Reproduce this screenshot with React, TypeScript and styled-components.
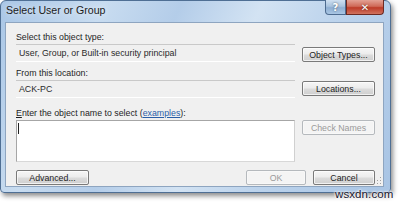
import styled, { createGlobalStyle } from 'styled-components';

const GlobalStyle = createGlobalStyle`
   html, body {
      margin: 0;
      padding: 0;
      background: #ffffff;
   }
   body {
      font-family: 'Liberation Sans', Arial, sans-serif;
   }
`;

const StageStyled = styled.div`
   position: relative;
   width: 400px;
   height: 206px;
   overflow: hidden;
   background: #ffffff;
`;

const WindowStyled = styled.div`
   display: flex;
   flex-direction: column;
   width: 391px;
   height: 193px;
   padding: 0 6px 5px 4px;
   box-sizing: border-box;
   border: 1px solid #4f6f94;
   border-radius: 6px 6px 4px 4px;
   background: linear-gradient(115deg, #a9c6e6 0%, #c8dcf0 22%, #b4cde9 38%, #d3e3f3 55%, #bcd3ec 72%, #a8c4e4 100%);
   box-shadow: 2px 3px 5px rgba(0, 0, 0, 0.45);
`;

const TitleBarStyled = styled.div`
   display: flex;
   align-items: flex-start;
   justify-content: space-between;
   height: 21px;
   flex-shrink: 0;
`;

const TitleTextStyled = styled.span`
   padding: 3px 0 0 1px;
   font-family: 'Liberation Sans', Arial, sans-serif;
   font-size: 10.6px;
   color: #1b1b1b;
   text-shadow: 0 0 6px rgba(255, 255, 255, 0.9);
`;

const CaptionButtonsStyled = styled.div`
   display: flex;
   margin-top: -1px;
`;

interface ICaptionButton {
   $variant: 'help' | 'close';
}

const CaptionButtonStyled = styled.div<ICaptionButton>`
   display: flex;
   align-items: center;
   justify-content: center;
   width: ${({ $variant }) => ($variant === 'close' ? '38px' : '21px')};
   height: 15px;
   box-sizing: border-box;
   border: 1px solid ${({ $variant }) => ($variant === 'close' ? '#6d2a22' : '#4d6b8f')};
   border-top: none;
   border-radius: ${({ $variant }) => ($variant === 'close' ? '0 0 4px 0' : '0 0 0 4px')};
   background: ${({ $variant }) =>
      $variant === 'close'
         ? 'linear-gradient(#e3a194 0%, #cf6a58 45%, #bd3b28 55%, #d0735f 100%)'
         : 'linear-gradient(#cfe0f1 0%, #a9c3de 45%, #8eaed2 55%, #a9c6e4 100%)'};
   color: #ffffff;
   font-family: 'DejaVu Sans', sans-serif;
   font-weight: bold;
   font-size: 10px;
   text-shadow: 0 0 2px rgba(0, 0, 0, 0.6);
`;

const ClientStyled = styled.div`
   position: relative;
   flex: 1;
   display: flex;
   flex-direction: column;
   padding: 8px 8px 0 10px;
   border: 1px solid #8ea5c0;
   background: #f0f0f0;
   font-family: 'Liberation Sans', Arial, sans-serif;
   font-size: 8.8px;
   color: #1e1e1e;
`;

const LabelStyled = styled.div`
   height: 12px;
   line-height: 12px;
   margin-bottom: 1px;
`;

const RowStyled = styled.div`
   display: grid;
   grid-template-columns: 1fr 73px;
   column-gap: 7px;
   align-items: start;
`;

const ReadonlyFieldStyled = styled.div`
   height: 16px;
   line-height: 16px;
   padding-left: 3px;
   border-top: 1px solid #c9c9c9;
   border-bottom: 1px solid #ffffff;
   color: #2a2a2a;
`;

interface IButton {
   $disabled?: boolean;
   $width?: number;
   $offset?: number;
}

const ButtonStyled = styled.div<IButton>`
   display: flex;
   align-items: center;
   justify-content: center;
   width: ${({ $width }) => ($width ? `${$width}px` : '100%')};
   height: 15px;
   margin-top: ${({ $offset }) => ($offset ? `${$offset}px` : '0')};
   box-sizing: border-box;
   border: 1px solid ${({ $disabled }) => ($disabled ? '#b5b9bd' : '#7a7a7a')};
   border-radius: 2px;
   background: ${({ $disabled }) =>
      $disabled ? '#f4f4f4' : 'linear-gradient(#f6f6f6 0%, #ececec 48%, #dcdcdc 52%, #cfcfcf 100%)'};
   color: ${({ $disabled }) => ($disabled ? '#9a9a9a' : '#1e1e1e')};
   font-size: 8.8px;
   box-shadow: inset 0 0 0 1px ${({ $disabled }) => ($disabled ? '#f8f8f8' : 'rgba(255, 255, 255, 0.7)')};
`;

const SpacerStyled = styled.div<{ $h: number }>`
   height: ${({ $h }) => $h}px;
`;

const NameInputStyled = styled.div`
   height: 42px;
   box-sizing: border-box;
   padding: 2px 0 0 1px;
   border: 1px solid #a6a6a6;
   border-bottom-color: #d8d8d8;
   border-right-color: #d0d0d0;
   background: #ffffff;
`;

const CaretStyled = styled.div`
   width: 1px;
   height: 11px;
   background: #222222;
`;

const LinkStyled = styled.span`
   color: #2a5ea8;
   text-decoration: underline;
`;

const UnderlineStyled = styled.span`
   text-decoration: underline;
`;

const FooterStyled = styled.div`
   display: flex;
   align-items: center;
   margin-top: 8px;
   gap: 7px;
`;

const FooterFillStyled = styled.div`
   flex: 1;
`;

const GripStyled = styled.svg`
   position: absolute;
   right: 1px;
   bottom: 1px;
`;

const WatermarkStyled = styled.div`
   position: absolute;
   left: 335px;
   top: 188px;
   font-family: 'Liberation Sans', Arial, sans-serif;
   font-size: 11.5px;
   color: #14142e;
   text-shadow: 0 0 2px #ffffff, 0 0 2px #ffffff, 0 0 3px #ffffff;
   letter-spacing: 0.1px;
`;

const App = () => {
   return (
      <StageStyled>
         <GlobalStyle />
         <WindowStyled>
            <TitleBarStyled>
               <TitleTextStyled>Select User or Group</TitleTextStyled>
               <CaptionButtonsStyled>
                  <CaptionButtonStyled $variant='help'>?</CaptionButtonStyled>
                  <CaptionButtonStyled $variant='close'>✕</CaptionButtonStyled>
               </CaptionButtonsStyled>
            </TitleBarStyled>
            <ClientStyled>
               <LabelStyled>Select this object type:</LabelStyled>
               <RowStyled>
                  <ReadonlyFieldStyled>User, Group, or Built-in security principal</ReadonlyFieldStyled>
                  <ButtonStyled $offset={3}>Object Types...</ButtonStyled>
               </RowStyled>
               <SpacerStyled $h={5} />
               <LabelStyled>From this location:</LabelStyled>
               <RowStyled>
                  <ReadonlyFieldStyled>ACK-PC</ReadonlyFieldStyled>
                  <ButtonStyled $offset={1}>Locations...</ButtonStyled>
               </RowStyled>
               <SpacerStyled $h={9} />
               <LabelStyled>
                  <UnderlineStyled>E</UnderlineStyled>nter the object name to select (<LinkStyled>examples</LinkStyled>):
               </LabelStyled>
               <RowStyled>
                  <NameInputStyled>
                     <CaretStyled />
                  </NameInputStyled>
                  <ButtonStyled $disabled>Check Names</ButtonStyled>
               </RowStyled>
               <FooterStyled>
                  <ButtonStyled $width={73}>Advanced...</ButtonStyled>
                  <FooterFillStyled />
                  <ButtonStyled $width={60} $disabled>
                     OK
                  </ButtonStyled>
                  <ButtonStyled $width={62}>Cancel</ButtonStyled>
               </FooterStyled>
               <GripStyled width='8' height='8' viewBox='0 0 8 8'>
                  <rect x='6' y='0' width='1' height='1' fill='#a0a0a0' />
                  <rect x='3' y='3' width='1' height='1' fill='#a0a0a0' />
                  <rect x='6' y='3' width='1' height='1' fill='#a0a0a0' />
                  <rect x='0' y='6' width='1' height='1' fill='#a0a0a0' />
                  <rect x='3' y='6' width='1' height='1' fill='#a0a0a0' />
                  <rect x='6' y='6' width='1' height='1' fill='#a0a0a0' />
               </GripStyled>
            </ClientStyled>
         </WindowStyled>
         <WatermarkStyled>wsxdn.com</WatermarkStyled>
      </StageStyled>
   );
};

export default App;
